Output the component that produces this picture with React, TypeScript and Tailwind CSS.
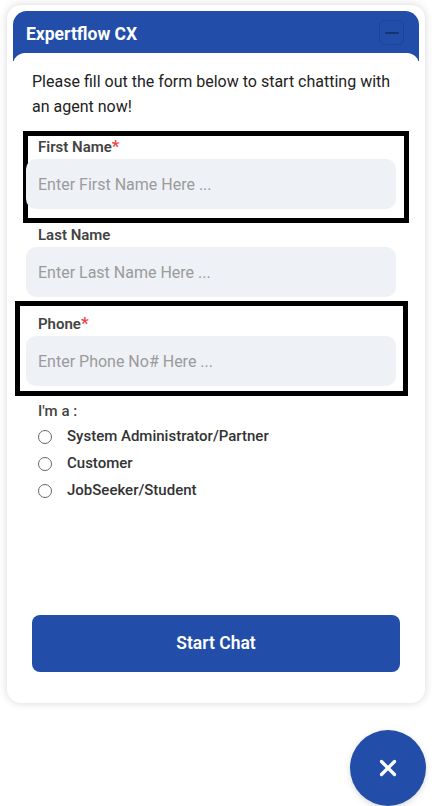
import { X } from "lucide-react";

const fields = [
  { label: "First Name", placeholder: "Enter First Name Here ...", required: true },
  { label: "Last Name", placeholder: "Enter Last Name Here ...", required: false },
  { label: "Phone", placeholder: "Enter Phone No# Here ...", required: true },
];

const roles = ["System Administrator/Partner", "Customer", "JobSeeker/Student"];

const App = () => {
  return (
    <div
      className="relative w-[432px] h-[806px] bg-white overflow-hidden"
      style={{ fontFamily: "Roboto, 'Noto Sans', sans-serif" }}
    >
      {/* Chat card */}
      <div className="ml-[7px] mt-[5px] w-[418px] h-[698px] p-[6px] bg-white rounded-[14px] shadow-[0_0_8px_rgba(0,0,0,0.16)] flex flex-col">
        {/* Header */}
        <div className="h-[50px] shrink-0 bg-[#224ea9] rounded-t-[14px] pl-[13px] pr-[15px] pt-[9px] flex items-start justify-between">
          <h1 className="mt-[2px] text-[17.5px] leading-[24px] font-bold text-white">
            Expertflow CX
          </h1>
          <button className="w-[25px] h-[25px] rounded-[6px] border border-[#1d4392] flex items-center justify-center">
            <span className="block w-[14px] h-[2px] bg-[#15356f] rounded-full" />
          </button>
        </div>

        {/* Body */}
        <div className="relative -mt-[8px] flex-1 bg-white rounded-t-[12px] flex flex-col">
          <p className="pt-[16px] px-[19px] text-[16px] leading-[25px] text-[#222]">
            Please fill out the form below to start chatting with an agent now!
          </p>

          <div className="mt-[18px] flex flex-col gap-[17px]">
            {fields.map((f, i) => (
              <div key={f.label} className="relative ml-[13px] w-[370px]">
                {f.required && (
                  <div
                    className={`absolute border-[5px] border-black pointer-events-none ${
                      i === 0
                        ? "-top-[6px] left-[-3px] w-[386px] h-[92px]"
                        : "-top-[13px] left-[-11px] w-[393px] h-[95px]"
                    }`}
                  />
                )}
                <label className="block pl-[12px] text-[15px] leading-[19px] font-semibold text-[#444]">
                  {f.label}
                  {f.required && <span className="text-[#ef4444] text-[17px]">*</span>}
                </label>
                <input
                  placeholder={f.placeholder}
                  className="relative mt-[2px] w-full h-[50px] rounded-[10px] bg-[#eef1f6] px-[12px] text-[16px] text-[#333] placeholder:text-[#9b9b9b] outline-none"
                />
              </div>
            ))}
          </div>

          {/* Role */}
          <div className="mt-[15px] ml-[25px]">
            <div className="text-[15px] leading-[20px] font-medium text-[#444]">I'm a :</div>
            <div className="mt-[2px] flex flex-col">
              {roles.map((r) => (
                <label key={r} className="h-[27px] flex items-center">
                  <span className="w-[14px] h-[14px] rounded-full border border-[#666] bg-white" />
                  <span className="ml-[15px] text-[15px] font-medium text-[#333]">{r}</span>
                </label>
              ))}
            </div>
          </div>

          <button className="mt-auto mb-[25px] ml-[19px] w-[368px] h-[57px] rounded-[8px] bg-[#224ea9] text-white text-[17.5px] font-semibold">
            Start Chat
          </button>
        </div>
      </div>

      {/* Close FAB */}
      <button className="absolute left-[350px] top-[730px] w-[76px] h-[76px] rounded-full bg-[#224ea9] shadow-[0_2px_6px_rgba(0,0,0,0.15)] flex items-center justify-center">
        <X className="w-[26px] h-[26px] text-white" strokeWidth={3} />
      </button>
    </div>
  );
};

export default App;
